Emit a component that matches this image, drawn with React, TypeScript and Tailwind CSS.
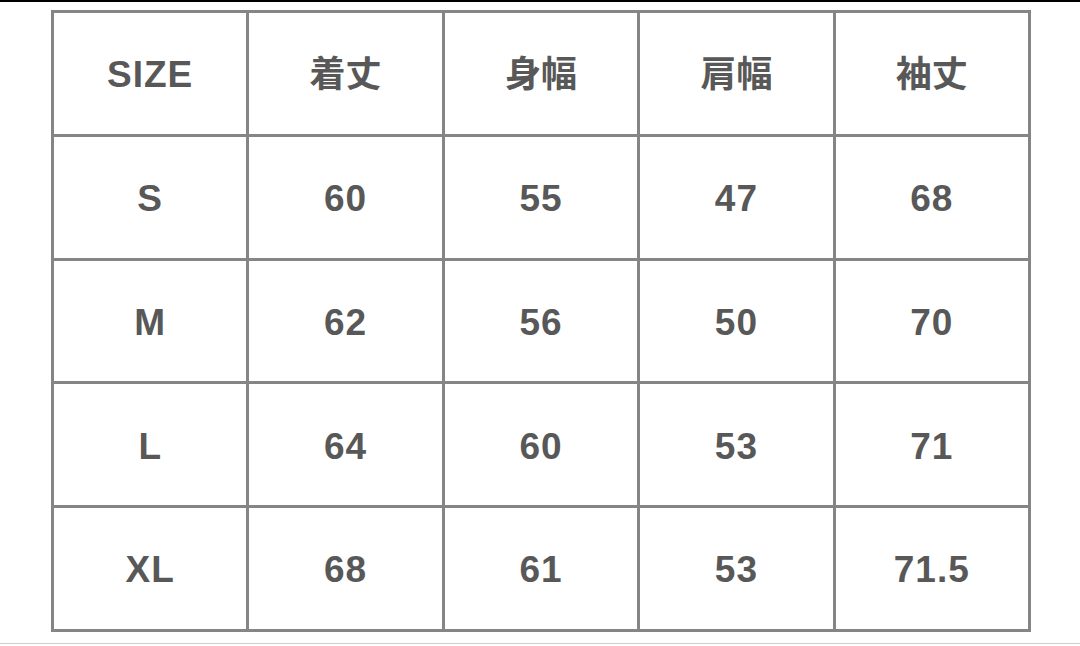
const header = ["SIZE", "着丈", "身幅", "肩幅", "袖丈"];

const rows = [
  ["S", "60", "55", "47", "68"],
  ["M", "62", "56", "50", "70"],
  ["L", "64", "60", "53", "71"],
  ["XL", "68", "61", "53", "71.5"],
];

function Cell({ children }: { children: React.ReactNode }) {
  return (
    <div className="flex items-center justify-center bg-white pt-[3px] text-[#585858]">
      {children}
    </div>
  );
}

export default function App() {
  return (
    <div
      className="flex h-[646px] w-[1080px] flex-col bg-white border-t-2 border-black"
      style={{ fontFamily: '"Liberation Sans", "Noto Sans CJK JP", sans-serif' }}
    >
      <div className="pl-[51px] pt-[8px]">
        {/* size chart */}
        <div className="grid h-[622px] w-[980px] grid-cols-5 grid-rows-5 gap-[3px] bg-[#858585] p-[3px] text-[37px] font-bold">
          {header.map((h) => (
            <Cell key={h}>
              <span className={h === "SIZE" ? "tracking-[1px]" : "text-[36px] font-bold"}>{h}</span>
            </Cell>
          ))}
          {rows.map((r) =>
            r.map((v, i) => (
              <Cell key={r[0] + i}>
                <span className="tracking-[1px]">{v}</span>
              </Cell>
            ))
          )}
        </div>
      </div>
      <div className="mt-auto mb-[2px] h-px bg-[#cfcfcf]" />
    </div>
  );
}
